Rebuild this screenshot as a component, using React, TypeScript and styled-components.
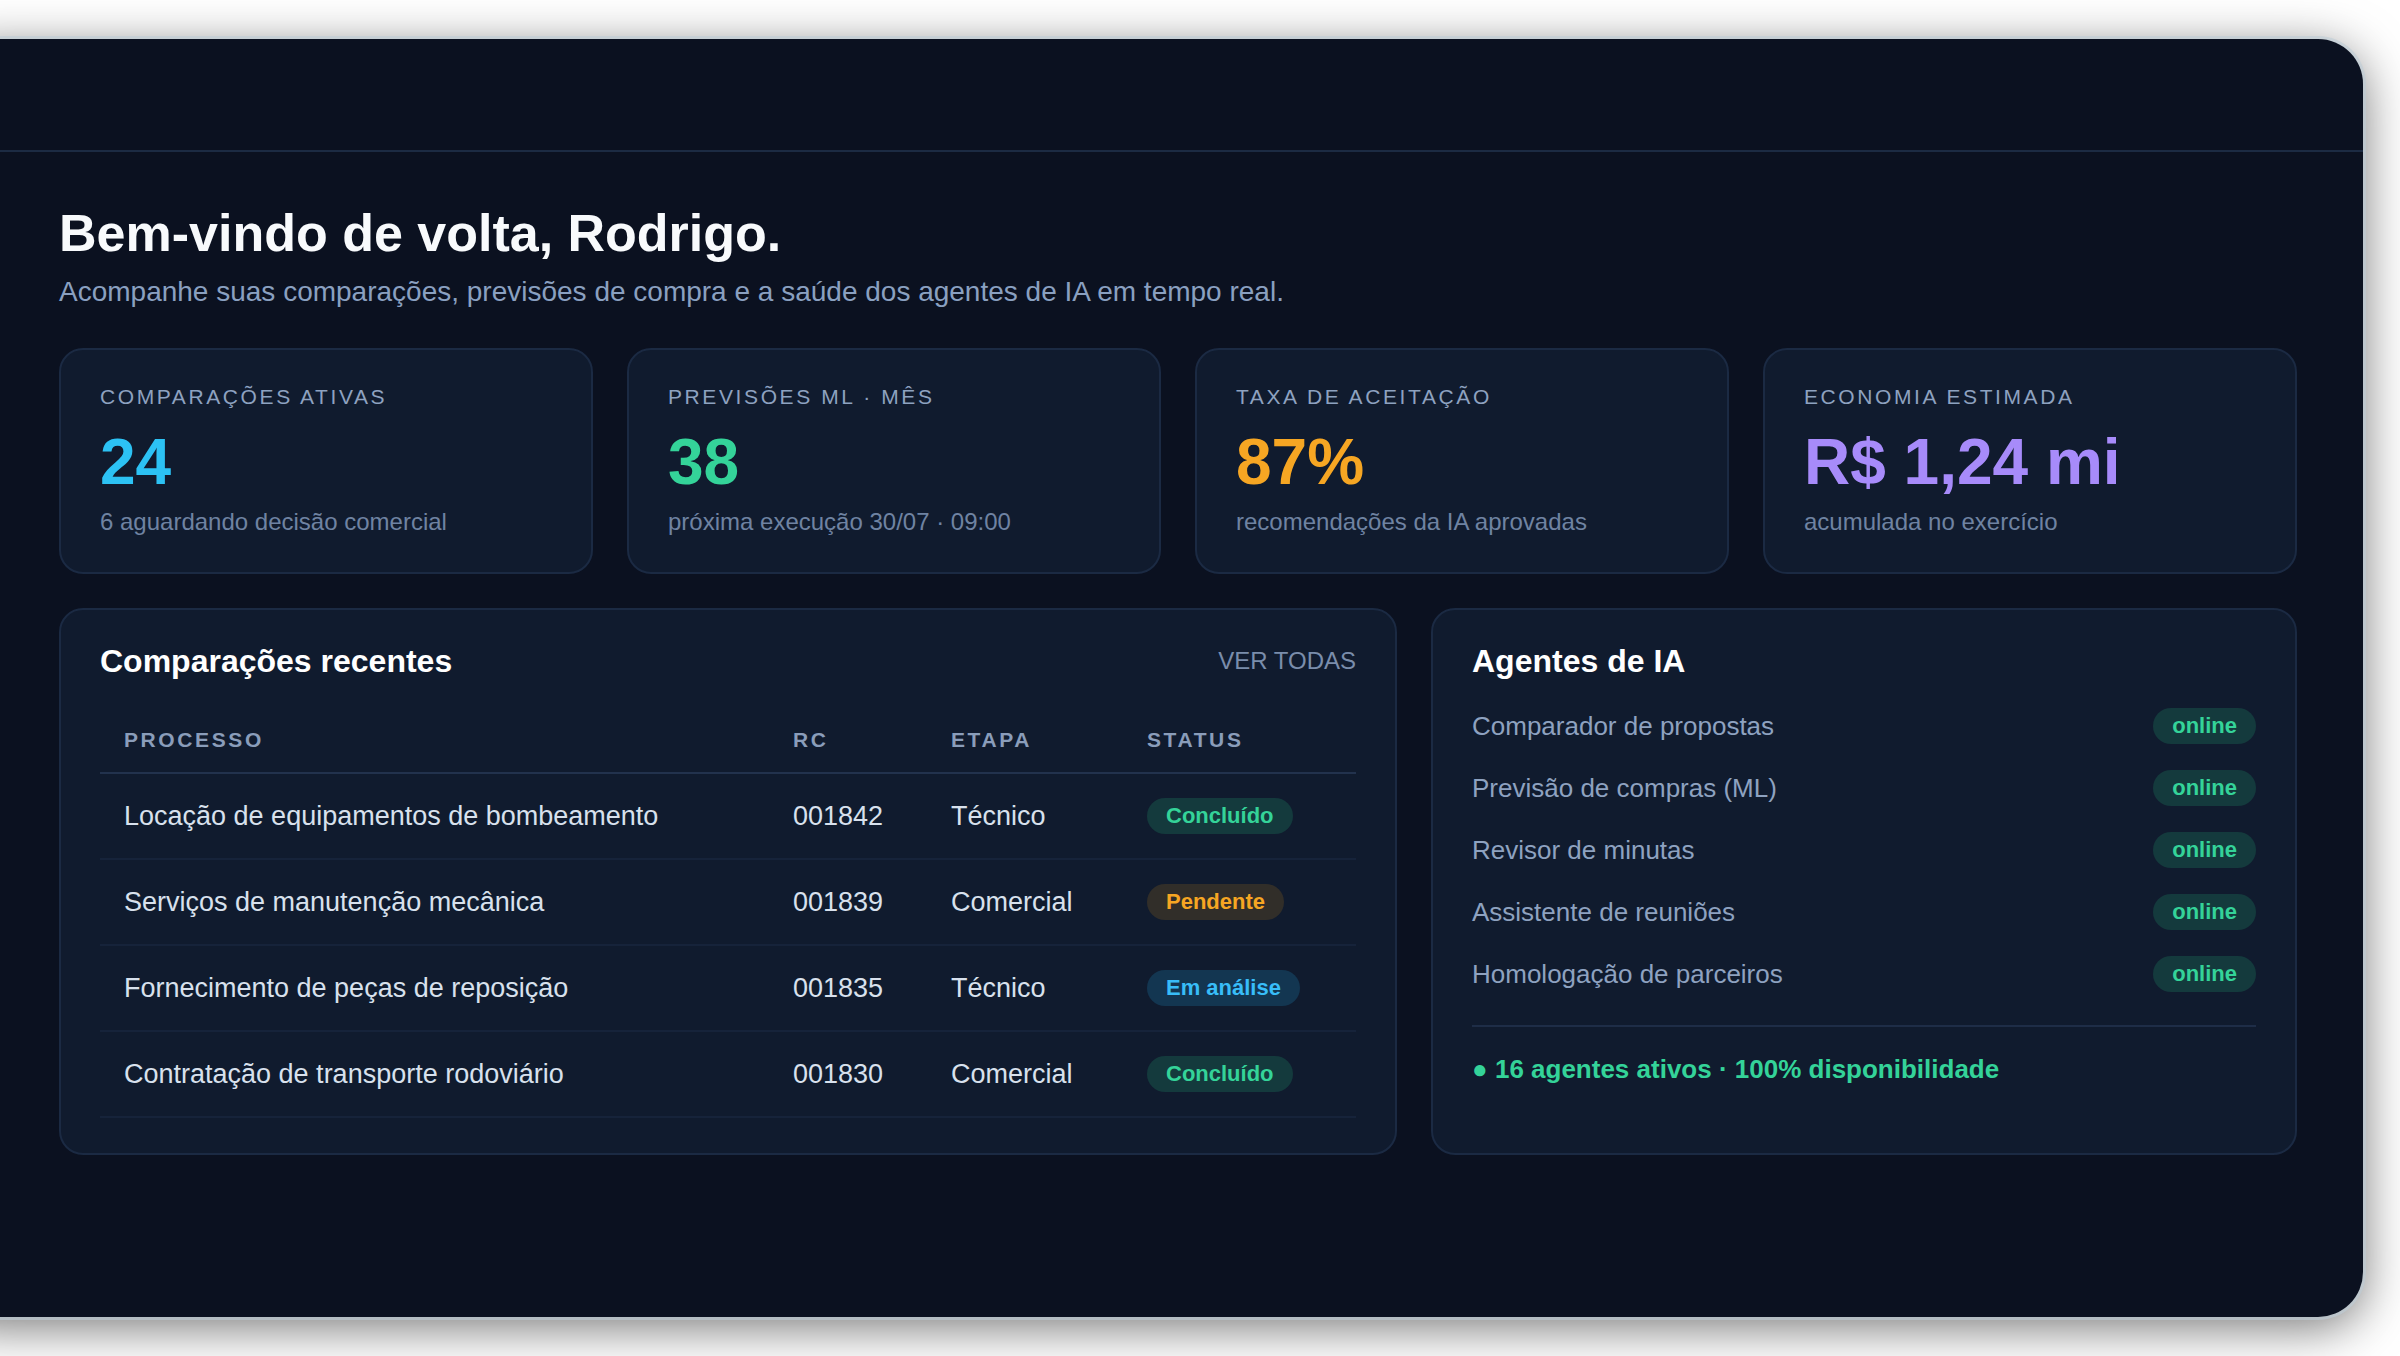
import React from "react";
import styled, { createGlobalStyle } from "styled-components";

const GlobalStyle = createGlobalStyle`
  html, body {
    margin: 0;
    padding: 0;
    background: #ffffff;
    overflow: hidden;
  }
  body {
    font-family: "Liberation Sans", Arial, Helvetica, sans-serif;
  }
  * { box-sizing: border-box; }
`;

const Stage = styled.div`
  width: 2400px;
  height: 1356px;
  padding-top: 39px;
  overflow: hidden;
`;

const Window = styled.div`
  margin-left: -60px;
  width: 2423px;
  height: 1278px;
  background: #0b1120;
  border-radius: 45px;
  box-shadow: 0 0 0 3px rgba(190, 205, 215, 0.6), 0 10px 50px rgba(0, 0, 0, 0.55);
  overflow: hidden;
  display: flex;
  flex-direction: column;
`;

const TopBar = styled.header`
  flex-shrink: 0;
  height: 113px;
  border-bottom: 2px solid #1c2b43;
`;

const Main = styled.main`
  padding: 50px 66px 0 119px;
`;

const Heading = styled.h1`
  margin: 0;
  font-size: 52px;
  line-height: 62px;
  font-weight: 700;
  color: #f8fafc;
`;

const Subtitle = styled.p`
  margin: 10px 0 0;
  font-size: 28px;
  line-height: 36px;
  color: #8aa0c0;
`;

const KpiGrid = styled.section`
  margin-top: 38px;
  display: grid;
  grid-template-columns: repeat(4, 1fr);
  gap: 34px;
`;

const Card = styled.div`
  background: #101b2e;
  border: 2px solid #1b2a43;
  border-radius: 24px;
`;

const KpiCard = styled(Card)`
  padding: 34px 39px 33px;
  display: flex;
  flex-direction: column;
`;

const KpiLabel = styled.div`
  font-size: 21px;
  line-height: 25px;
  letter-spacing: 2.6px;
  text-transform: uppercase;
  color: #8ea2c0;
`;

const KpiValue = styled.div<{ $color: string }>`
  margin-top: 19px;
  font-size: 64px;
  line-height: 68px;
  font-weight: 700;
  color: ${(p) => p.$color};
`;

const KpiSub = styled.div`
  margin-top: 9px;
  font-size: 24px;
  line-height: 34px;
  color: #6f83a2;
`;

const BottomGrid = styled.section`
  margin-top: 34px;
  display: grid;
  grid-template-columns: 1337fr 867fr;
  gap: 34px;
  align-items: stretch;
`;

const PanelCard = styled(Card)`
  padding: 32px 39px 35px;
  display: flex;
  flex-direction: column;
`;

const CardHeader = styled.div`
  display: flex;
  justify-content: space-between;
  align-items: center;
`;

const CardTitle = styled.h2`
  margin: 0;
  font-size: 32px;
  line-height: 38px;
  font-weight: 700;
  color: #ffffff;
`;

const HeaderLink = styled.a`
  font-size: 24px;
  line-height: 28px;
  color: #7a8dab;
  text-decoration: none;
  cursor: pointer;
`;

const Table = styled.table`
  margin-top: 27px;
  width: 100%;
  border-collapse: collapse;
  table-layout: fixed;
`;

const Col = styled.col<{ $w: number }>`
  width: ${(p) => p.$w}px;
`;

const Th = styled.th`
  text-align: left;
  padding: 20px 24px;
  font-size: 21px;
  line-height: 25px;
  font-weight: 700;
  letter-spacing: 2.6px;
  color: #8a9dba;
  border-bottom: 2px solid #22324d;
`;

const Td = styled.td`
  padding: 24px 24px;
  font-size: 27px;
  line-height: 36px;
  color: #d8e1ed;
  border-bottom: 2px solid #16233a;
  white-space: nowrap;
`;

type Tone = "green" | "amber" | "blue";

const tones: Record<Tone, { fg: string; bg: string }> = {
  green: { fg: "#34d399", bg: "#143a3d" },
  amber: { fg: "#f6a623", bg: "#312e29" },
  blue: { fg: "#38bdf8", bg: "#133651" },
};

const Badge = styled.span<{ $tone: Tone }>`
  display: inline-block;
  vertical-align: top;
  height: 36px;
  line-height: 36px;
  padding: 0 19px;
  border-radius: 999px;
  font-size: 22px;
  font-weight: 700;
  color: ${(p) => tones[p.$tone].fg};
  background: ${(p) => tones[p.$tone].bg};
`;

const AgentList = styled.ul`
  list-style: none;
  margin: 28px 0 0;
  padding: 0;
  display: flex;
  flex-direction: column;
  gap: 26px;
`;

const AgentRow = styled.li`
  display: flex;
  justify-content: space-between;
  align-items: center;
  height: 36px;
`;

const AgentName = styled.span`
  font-size: 26px;
  line-height: 36px;
  color: #8ea2c0;
`;

const AgentFooter = styled.div`
  margin-top: 33px;
  border-top: 2px solid #1e2d47;
  padding-top: 24px;
  font-size: 26px;
  line-height: 36px;
  font-weight: 700;
  color: #34d399;
`;

const kpis = [
  { label: "Comparações ativas", value: "24", color: "#2cc2f4", sub: "6 aguardando decisão comercial" },
  { label: "Previsões ML · mês", value: "38", color: "#34d399", sub: "próxima execução 30/07 · 09:00" },
  { label: "Taxa de aceitação", value: "87%", color: "#f6a623", sub: "recomendações da IA aprovadas" },
  { label: "Economia estimada", value: "R$ 1,24 mi", color: "#a78bfa", sub: "acumulada no exercício" },
];

const rows: { processo: string; rc: string; etapa: string; status: string; tone: Tone }[] = [
  { processo: "Locação de equipamentos de bombeamento", rc: "001842", etapa: "Técnico", status: "Concluído", tone: "green" },
  { processo: "Serviços de manutenção mecânica", rc: "001839", etapa: "Comercial", status: "Pendente", tone: "amber" },
  { processo: "Fornecimento de peças de reposição", rc: "001835", etapa: "Técnico", status: "Em análise", tone: "blue" },
  { processo: "Contratação de transporte rodoviário", rc: "001830", etapa: "Comercial", status: "Concluído", tone: "green" },
];

const agents = [
  "Comparador de propostas",
  "Previsão de compras (ML)",
  "Revisor de minutas",
  "Assistente de reuniões",
  "Homologação de parceiros",
];

export default function App() {
  return (
    <>
      <GlobalStyle />
      <Stage>
        <Window>
          <TopBar />
          <Main>
            <Heading>Bem-vindo de volta, Rodrigo.</Heading>
            <Subtitle>
              Acompanhe suas comparações, previsões de compra e a saúde dos agentes de IA em tempo real.
            </Subtitle>

            <KpiGrid>
              {kpis.map((k) => (
                <KpiCard key={k.label}>
                  <KpiLabel>{k.label}</KpiLabel>
                  <KpiValue $color={k.color}>{k.value}</KpiValue>
                  <KpiSub>{k.sub}</KpiSub>
                </KpiCard>
              ))}
            </KpiGrid>

            <BottomGrid>
              <PanelCard>
                <CardHeader>
                  <CardTitle>Comparações recentes</CardTitle>
                  <HeaderLink>VER TODAS</HeaderLink>
                </CardHeader>
                <Table>
                  <colgroup>
                    <Col $w={669} />
                    <Col $w={158} />
                    <Col $w={196} />
                    <Col $w={233} />
                  </colgroup>
                  <thead>
                    <tr>
                      <Th>PROCESSO</Th>
                      <Th>RC</Th>
                      <Th>ETAPA</Th>
                      <Th>STATUS</Th>
                    </tr>
                  </thead>
                  <tbody>
                    {rows.map((r) => (
                      <tr key={r.rc}>
                        <Td>{r.processo}</Td>
                        <Td>{r.rc}</Td>
                        <Td>{r.etapa}</Td>
                        <Td>
                          <Badge $tone={r.tone}>{r.status}</Badge>
                        </Td>
                      </tr>
                    ))}
                  </tbody>
                </Table>
              </PanelCard>

              <PanelCard>
                <CardTitle>Agentes de IA</CardTitle>
                <AgentList>
                  {agents.map((a) => (
                    <AgentRow key={a}>
                      <AgentName>{a}</AgentName>
                      <Badge $tone="green">online</Badge>
                    </AgentRow>
                  ))}
                </AgentList>
                <AgentFooter>● 16 agentes ativos · 100% disponibilidade</AgentFooter>
              </PanelCard>
            </BottomGrid>
          </Main>
        </Window>
      </Stage>
    </>
  );
}
